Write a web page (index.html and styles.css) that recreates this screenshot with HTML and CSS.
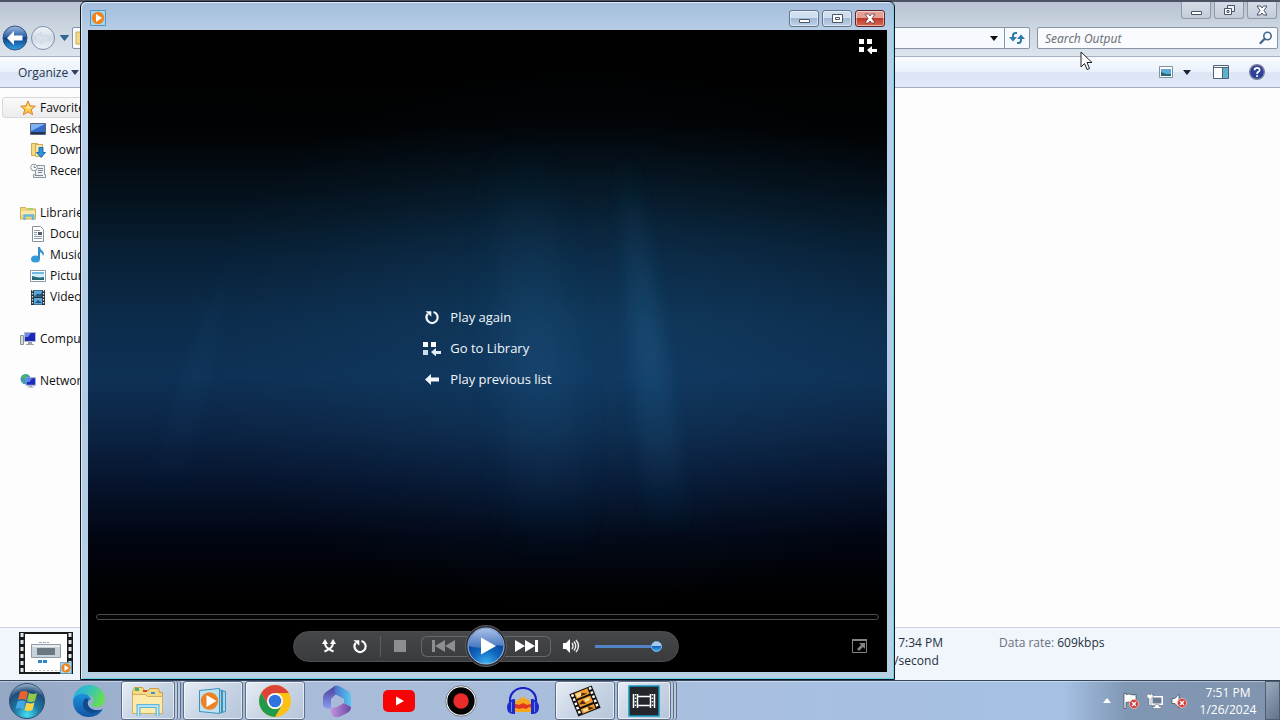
FILE: index.html
```
<!DOCTYPE html>
<html lang="en">
  <head>
    <meta charset="UTF-8" />
    <meta name="viewport" content="width=device-width, initial-scale=1.0" />
    <title>Windows Media Player</title>
    <link rel="stylesheet" href="styles.css">
  </head>
  <body>
    <!-- Shared icons -->
    <svg class="icon-defs" width="0" height="0" aria-hidden="true">
      <symbol id="icon-library" viewBox="0 0 20 16">
        <path fill="currentColor" d="M1 1h5v5h-5zM9 1h5v5h-5zM1 9h5v5h-5zM9 12l5-4v3h5v3h-5v3z" />
      </symbol>
      <symbol id="icon-repeat" viewBox="0 0 16 16">
        <path fill="none" stroke="currentColor" stroke-width="2.2" d="M9.500 3A5.600 5.600 0 1 1 3.800 4.800" />
        <path fill="currentColor" d="M1.500 2.200h5.800v5.600z" />
      </symbol>
      <symbol id="icon-picture" viewBox="0 0 16 14">
        <path fill="#fdfefe" stroke="#8b9aa6" d="M.5 1.500h15v11h-15z" />
        <path fill="#6fb9e4" d="M2 3h12v8h-12z" />
        <path fill="#d3eefa" d="M2 5h12v3h-12z" />
        <path fill="#256a72" d="M2 7l4 1 4 1 4-1v3h-12z" />
      </symbol>
      <symbol id="icon-wmp" viewBox="0 0 16 16">
        <path fill="#a9d5ee" stroke="#4b98c6" d="M.5 .5h15v15h-15z" />
        <circle cx="8" cy="8" r="6.2" fill="#ef8420" />
        <path fill="#fff" d="M6 4l6 4-6 4z" />
      </symbol>
      <symbol id="icon-error" viewBox="0 0 10 10">
        <circle cx="5" cy="5" r="4.5" fill="#d3342e" stroke="#f3b5b0" />
        <path stroke="#fff" stroke-width="1.500" d="M3 3l4 4M7 3l-4 4" />
      </symbol>
    </svg>

    <main class="desktop">
      <!-- Explorer window -->
      <section class="explorer">
        <div class="explorer-title">
          <button class="caption-btn" aria-label="Minimize"><svg width="30" height="17" viewBox="0 0 30 17"><path fill="#fff" stroke="#4a5466" d="M10.500 9.500h10v3h-10z" /></svg></button>
          <button class="caption-btn" aria-label="Restore"><svg width="30" height="17" viewBox="0 0 30 17"><path fill="#eef3f9" stroke="#4a5466" d="M13.500 3.500h7v6h-7z" /><path fill="#fff" stroke="#4a5466" d="M10.500 6.500h7v6h-7zM13 8.500h2v2h-2z" /></svg></button>
          <button class="caption-btn" aria-label="Close"><svg width="30" height="17" viewBox="0 0 30 17"><path fill="#fff" stroke="#4a5466" d="M10 4h3.500l1.500 2 1.500-2h3.500l-3 4.500 3 4.500h-3.500l-1.500-2-1.500 2h-3.500l3-4.500z" /></svg></button>
        </div>

        <div class="explorer-nav">
          <button class="plain-btn" aria-label="Back">
            <svg width="26" height="26" viewBox="0 0 26 26">
              <defs><linearGradient id="backFill" x2="0" y2="1"><stop offset="0" stop-color="#9fbce0" /><stop offset=".45" stop-color="#2a61a8" /><stop offset=".5" stop-color="#0c3f86" /><stop offset="1" stop-color="#2fa4e6" /></linearGradient></defs>
              <circle cx="13" cy="13" r="12" fill="url(#backFill)" stroke="#33527e" />
              <path fill="#fff" d="M5 13l7-7v4.500h8.500v5h-8.500v4.500z" />
            </svg>
          </button>
          <button class="plain-btn" aria-label="Forward">
            <svg width="26" height="26" viewBox="0 0 26 26">
              <defs><linearGradient id="fwdFill" x2="0" y2="1"><stop offset="0" stop-color="#f4f7fb" /><stop offset=".5" stop-color="#cfd9e6" /><stop offset="1" stop-color="#eef3f8" /></linearGradient></defs>
              <circle cx="13" cy="13" r="11.500" fill="url(#fwdFill)" stroke="#7e8fa8" />
              <path fill="#d9e2ec" stroke="#cdd7e2" d="M5 13l6-6v4h8v4h-8v4z" />
            </svg>
          </button>
          <button class="plain-btn" aria-label="Recent pages"><svg width="9" height="6" viewBox="0 0 9 6"><path fill="#2a6fa5" stroke="#24405f" stroke-width=".7" d="M.5 .5h8l-4 5z" /></svg></button>
          <div class="address">
            <span class="address-path"><svg width="16" height="16" viewBox="0 0 16 16"><path fill="#f3d987" stroke="#cfae4f" d="M1 2h6l1 2h7v10h-14z" /></svg></span>
            <button class="plain-btn address-drop" aria-label="Previous locations"><svg width="8" height="5" viewBox="0 0 8 5"><path fill="#111" d="M0 0h8l-4 5z" /></svg></button>
            <button class="plain-btn refresh" aria-label="Refresh">
              <svg width="16" height="14" viewBox="0 0 16 14"><path fill="none" stroke="#2f78a8" stroke-width="2" d="M8 2h-1.500q-2.500 0-2.500 3v2M8 12h1.500q2.500 0 2.500-3v-2" /><path fill="#2f78a8" d="M0 6h8l-4 4.500zM8 8h8l-4-4.500z" /></svg>
            </button>
          </div>
          <label class="search">
            <input type="text" placeholder="Search Output" aria-label="Search Output" />
            <svg width="14" height="14" viewBox="0 0 14 14"><circle cx="8.500" cy="5" r="3.700" fill="#f4faff" stroke="#47668c" stroke-width="1.600" /><path stroke="#47668c" stroke-width="2.400" stroke-linecap="round" d="M5.500 8l-4 4" /></svg>
          </label>
        </div>

        <div class="explorer-toolbar">
          <button class="plain-btn organize">Organize <svg width="8" height="5" viewBox="0 0 8 5"><path fill="#34405a" d="M0 0h8l-4 5z" /></svg></button>
          <div class="toolbar-right">
            <button class="plain-btn" aria-label="Change view"><svg width="14" height="13" viewBox="0 0 14 13"><path fill="#fff" stroke="#7f90a0" d="M.5 .5h13v11h-13z" /><path fill="#5aabd9" d="M2 3h10v7h-10z" /><path fill="#256a72" d="M2 6l5 2h5v2h-10z" /></svg></button>
            <button class="plain-btn view-drop" aria-label="More views"><svg width="8" height="5" viewBox="0 0 8 5"><path fill="#1c2433" d="M0 0h8l-4 5z" /></svg></button>
            <button class="plain-btn" aria-label="Preview pane"><svg width="16" height="14" viewBox="0 0 16 14"><path fill="#fff" stroke="#4c6379" d="M.5 .5h15v13h-15z" /><path fill="#5db2cd" d="M10 3h5v10h-5z" /><path stroke="#4c6379" d="M1 2.500h14M9.500 3v10" /></svg></button>
            <button class="plain-btn help" aria-label="Help"><svg width="16" height="16" viewBox="0 0 16 16"><circle cx="8" cy="8" r="7.300" fill="#2b3f9b" stroke="#78819a" stroke-width="1.400" /><path fill="none" stroke="#fff" stroke-width="1.800" d="M5.500 6.300q.2-2.500 2.600-2.500 2.500 0 2.500 2.100 0 1.200-1.400 2-1.100.6-1.100 2" /><circle cx="8.100" cy="12" r="1.100" fill="#fff" /></svg></button>
          </div>
        </div>

        <div class="explorer-body">
          <nav class="tree">
            <ul>
              <li class="tree-head selected"><svg width="16" height="16" viewBox="0 0 16 16"><path fill="#fbc94b" stroke="#d9822c" d="M8 1l2 4.800 5.300.4-4 3.400 1.300 5.100-4.600-2.800-4.600 2.800 1.300-5.100-4-3.400 5.300-.4z" /><path fill="#fff0a8" d="M8 4l1 3h3l-4 2-3-2h2z" /></svg>Favorites</li>
              <li><svg width="16" height="14" viewBox="0 0 16 14"><path fill="#346ccc" stroke="#5a6678" d="M.5 1.500h15v11h-15z" /><path fill="#7fb2f2" d="M1 2h14l-14 7z" /><path fill="#26334d" d="M1 10h14v2h-14z" /></svg>Desktop</li>
              <li><svg width="16" height="16" viewBox="0 0 16 16"><path fill="#f4d983" stroke="#cdaa55" d="M1.500 1.500h6v12h-6z" /><path fill="#f9e7ab" stroke="#cdaa55" d="M5.500 2.500h7v12h-7z" /><path fill="#2c95dc" stroke="#1b6ca9" d="M9 5.500h4v5h2.500l-4.500 5-4.500-5h2.500z" /></svg>Downloads</li>
              <li><svg width="16" height="16" viewBox="0 0 16 16"><path fill="#eef1f3" stroke="#8c969e" d="M6.500 2.500h8v9h1v3h-12v-3h2v-9z" /><circle cx="4" cy="4.500" r="3.300" fill="#fff" stroke="#8c969e" /><path fill="none" stroke="#7d868e" d="M4 2.500v2h2M8 5.500h5M8 7.500h5M8 9.500h4M5 12.500h8" /></svg>Recent Places</li>
            </ul>
            <ul>
              <li class="tree-head"><svg width="16" height="14" viewBox="0 0 16 14"><path fill="#f2d57c" stroke="#cfae58" d="M.5 1.500h5l1 1.500h9v10h-15z" /><path fill="#9ed26e" d="M8 2h5v2h-5z" /><path fill="#fae9ab" d="M1 5h14v4h-14z" /><path fill="none" stroke="#68b8d9" stroke-width="2.400" d="M4.500 14v-4.500h8.500v4.500" /></svg>Libraries</li>
              <li><svg width="16" height="16" viewBox="0 0 16 16"><path fill="#fff" stroke="#88919a" d="M2.500 .5h8l3 3v12h-11z" /><path stroke="#929ba3" d="M4 4.500h6M4 6.500h3M4 8.500h3M4 10.500h8M4 12.500h8" /><path fill="#53606b" d="M8 6h4v3h-4z" /></svg>Documents</li>
              <li><svg width="16" height="16" viewBox="0 0 16 16"><ellipse cx="5.500" cy="12" rx="4.500" ry="3.500" fill="#349bd8" /><path fill="#328fcb" d="M8 0h2q0 2 2.500 4 2.500 2 .5 5-.2-3-3-4v7h-2z" /></svg>Music</li>
              <li><svg width="16" height="14" viewBox="0 0 16 14"><use href="#icon-picture" /></svg>Pictures</li>
              <li><svg width="16" height="16" viewBox="0 0 16 16"><path fill="#26313b" d="M1 1h14v15h-14z" /><path fill="#5ba8df" d="M4 1.500h8v6h-8zM4 9h8v6.500h-8z" /><path fill="#235477" d="M4 7.500l4-3 2 1 2-2v4zM5 14l3-3 4 3z" /><path stroke="#dbe4e9" stroke-width="1.300" stroke-dasharray="1.500 1.500" d="M2.500 1v15M13.500 1v15" /></svg>Videos</li>
            </ul>
            <ul>
              <li class="tree-head"><svg width="16" height="14" viewBox="0 0 16 14"><path fill="#d5dad8" stroke="#8b9692" d="M.5 3.500h3v9h-3z" /><path fill="#1c27b8" stroke="#b4bccb" d="M4.500 .5h11v9h-11z" /><path fill="#6c86ee" d="M5 1h6l-3 4h-3z" /><path fill="#9ba3b3" d="M8 10h4v2h2v1h-8v-1h2z" /></svg>Computer</li>
            </ul>
            <ul>
              <li class="tree-head"><svg width="16" height="16" viewBox="0 0 17 16"><circle cx="6" cy="6" r="5.500" fill="#2e95cf" /><path fill="#55b35b" d="M2 3q3-3 6-2l-2 4-3 1zM1 7l3 1 1 3q-3-1-4-4z" /><path fill="#1c2bc0" stroke="#a9b5cb" d="M6.500 4.500h10v8h-10z" /><path fill="#6487ee" d="M7 5h6l-3 4h-3z" /><path fill="#97a3b5" d="M10 13h3v1h2v1h-7v-1h2z" /></svg>Network</li>
            </ul>
          </nav>
          <div class="file-area"></div>
        </div>

        <footer class="details">
          <svg class="thumb" width="54" height="42" viewBox="0 0 54 42">
            <path fill="#181a1c" d="M0 0h54v42h-54z" />
            <path fill="#fff" d="M6 2h42v38h-42z" />
            <path stroke="#dfe5e8" stroke-width="3" stroke-dasharray="4 3" d="M3 1v40M51 1v40" />
            <path fill="#c8d0d8" stroke="#8e9aa6" d="M12.500 12.500h29v13h-29z" />
            <path fill="#6c7881" d="M18 16h18v7h-18z" />
            <path fill="#e9edf0" d="M13 13h28v2h-28z" />
            <path stroke="#8ca6bc" stroke-dasharray="3 1" d="M20 10.500h10" />
            <path stroke="#2e86cb" stroke-width="3" stroke-dasharray="4 1" d="M19 29.500h10" />
            <path stroke="#b4b8bb" stroke-dasharray="2 2" d="M12 38.500h30" />
            <use href="#icon-wmp" x="41" y="30" width="12" height="12" />
          </svg>
          <dl class="details-main">
            <dt>Date created:</dt><dd>1/26/2024 7:34 PM</dd>
            <dt>Frame rate:</dt><dd>30 frames/second</dd>
          </dl>
          <dl class="details-rate">
            <dt>Data rate:</dt><dd>609kbps</dd>
          </dl>
        </footer>
      </section>

      <!-- Media player window -->
      <section class="player">
        <header class="player-title">
          <svg width="16" height="16" viewBox="0 0 16 16"><use href="#icon-wmp" /></svg>
          <div class="caption-group">
            <button class="caption-btn blue" aria-label="Minimize"><svg width="30" height="17" viewBox="0 0 30 17"><path fill="#fff" stroke="#4a5466" d="M10.500 9.500h10v3h-10z" /></svg></button>
            <button class="caption-btn blue" aria-label="Maximize"><svg width="30" height="17" viewBox="0 0 30 17"><path fill="#fff" stroke="#4a5466" d="M10.500 4.500h10v8h-10zM13.500 7.500h4v2h-4z" /></svg></button>
            <button class="caption-btn red" aria-label="Close"><svg width="30" height="17" viewBox="0 0 30 17"><path fill="#fff" stroke="#6c3a42" stroke-width=".8" d="M10 4h3.500l1.500 2 1.500-2h3.500l-3 4.500 3 4.500h-3.500l-1.500-2-1.500 2h-3.500l3-4.500z" /></svg></button>
          </div>
        </header>

        <div class="stage">
          <svg class="beams" viewBox="0 0 800 642" preserveAspectRatio="none" aria-hidden="true">
            <defs>
              <filter id="soft" x="-50%" y="-20%" width="200%" height="140%"><feGaussianBlur stdDeviation="8" /></filter>
              <filter id="wide" x="-80%" y="-20%" width="260%" height="140%"><feGaussianBlur stdDeviation="18" /></filter>
              <linearGradient id="beam" x2="0" y2="1"><stop offset="0" stop-color="#2a76aa" stop-opacity="0" /><stop offset=".5" stop-color="#2a76aa" stop-opacity=".3" /><stop offset="1" stop-color="#2a76aa" stop-opacity="0" /></linearGradient>
            </defs>
            <path fill="url(#beam)" filter="url(#soft)" opacity=".8" d="M528 120L548 120 605 510 560 510z" />
            <path fill="url(#beam)" filter="url(#wide)" opacity=".55" d="M405 110L460 110 500 530 425 530z" />
            <path fill="url(#beam)" filter="url(#soft)" opacity=".25" d="M150 190L95 480 50 480z" />
          </svg>

          <div class="stage-top">
            <button class="plain-btn" aria-label="Switch to Library"><svg width="20" height="17" viewBox="0 0 20 17"><use href="#icon-library" width="20" height="16" /></svg></button>
          </div>

          <div class="stage-menu">
            <div class="menu-list">
              <button class="menu-item"><svg width="18" height="16" viewBox="0 0 18 16"><use href="#icon-repeat" x="1" width="16" height="16" /></svg>Play again</button>
              <button class="menu-item"><svg width="18" height="16" viewBox="0 0 18 16"><path fill="#fff" d="M0 2h5v5h-5zM8 2h5v5h-5z" /><path fill="#cbdcea" d="M0 10h5v5h-5z" /><path fill="#e3edf5" d="M8 12l5-4v3h5v3h-5v2.500z" /></svg>Go to Library</button>
              <button class="menu-item"><svg width="18" height="16" viewBox="0 0 18 16"><path fill="currentColor" d="M2 8.500l6-5.500v3.500h8v4h-8v3.500z" /></svg>Play previous list</button>
            </div>
          </div>

          <input class="seek" type="range" min="0" max="100" value="0" aria-label="Seek" />

          <div class="controls">
            <div class="pill">
              <button class="ctl shuffle" aria-label="Shuffle"><svg width="16" height="16" viewBox="0 0 16 16"><path fill="none" stroke="#fff" stroke-width="2" d="M4 5q0 4 4 6 2 1.500 4.500 2.500M12 5q0 4-4 6-2 1.500-4.500 2.500" /><path fill="#fff" d="M1 6l3-5 3 5zM9 6l3-5 3 5z" /></svg></button>
              <button class="ctl" aria-label="Repeat"><svg width="16" height="16" viewBox="0 0 16 16"><use href="#icon-repeat" /></svg></button>
              <span class="divider"></span>
              <button class="ctl" aria-label="Stop"><svg width="12" height="12" viewBox="0 0 12 12"><path fill="#8d8e90" d="M0 0h12v12h-12z" /></svg></button>
              <button class="skip prev" aria-label="Previous"><svg width="24" height="12" viewBox="0 0 24 12"><path fill="#8d8e90" d="M0 0h3v12h-3zM13 0v12l-10-6zM23 0v12l-10-6z" /></svg></button>
              <button class="play" aria-label="Play">
                <svg width="42" height="42" viewBox="0 0 42 42">
                  <defs>
                    <linearGradient id="playTop" x2="0" y2="1"><stop offset="0" stop-color="#a9c0e8" /><stop offset="1" stop-color="#4577c0" /></linearGradient>
                    <radialGradient id="playBase" cx=".5" cy="1" r=".8"><stop offset="0" stop-color="#3bb6f5" /><stop offset=".5" stop-color="#1165bd" /><stop offset="1" stop-color="#0a3c91" /></radialGradient>
                  </defs>
                  <circle cx="21" cy="21" r="20.500" fill="#2c2f35" stroke="#5b5e62" />
                  <circle cx="21" cy="21" r="18" fill="url(#playBase)" stroke="#a6c0e6" />
                  <path fill="url(#playTop)" d="M3.500 21a17.500 17.500 0 0 1 35 0q-9-2-17.500 1-9 2-17.500-1z" />
                  <path fill="#fff" d="M16 12.500l15 8.500-15 8.500z" />
                </svg>
              </button>
              <button class="skip next" aria-label="Next"><svg width="24" height="12" viewBox="0 0 24 12"><path fill="#fff" d="M0 0v12l10-6zM10 0v12l10-6zM20 0h3v12h-3z" /></svg></button>
              <button class="ctl mute" aria-label="Mute"><svg width="18" height="16" viewBox="0 0 18 16"><path fill="#fff" d="M1 5h3l4-4v14l-4-4h-3z" /><path fill="none" stroke="#eee" stroke-width="1.400" d="M10 5q2 3 0 6M12 3.500q3.500 4.500 0 9M14 2q5 6 0 12" /></svg></button>
              <input class="volume" type="range" min="0" max="100" value="100" aria-label="Volume" />
            </div>
            <button class="plain-btn fullscreen" aria-label="View full screen"><svg width="16" height="14" viewBox="0 0 16 14"><path fill="none" stroke="#85827f" d="M.5 .5h14v13h-14z" /><path fill="#85827f" d="M0 0h15v2h-15zM7 4h6v6l-2-2-4 4-2-2 4-4z" /></svg></button>
          </div>
        </div>
      </section>

      <svg class="cursor" width="13" height="20" viewBox="0 0 13 20" aria-hidden="true"><path fill="#fff" stroke="#222" d="M1 1v15l3.500-3.500 2.500 6 2.500-1-2.500-6h5z" /></svg>
    </main>

    <!-- Taskbar -->
    <footer class="taskbar">
      <button class="start" aria-label="Start">
        <svg width="38" height="38" viewBox="0 0 38 38">
          <defs><radialGradient id="orb" cx=".5" cy=".9" r=".9"><stop offset="0" stop-color="#45e0f4" /><stop offset=".4" stop-color="#1c78a7" /><stop offset=".75" stop-color="#214d79" /><stop offset="1" stop-color="#a0b8d0" /></radialGradient></defs>
          <circle cx="19" cy="19" r="17.500" fill="url(#orb)" stroke="#2d4e70" />
          <path fill="#ec6130" d="M12 10q4-2 8 0l-2 8q-4-2-8 0z" />
          <path fill="#93c746" d="M21 11q4 2 8 0l-2 8q-4 2-8 0z" />
          <path fill="#47a7e5" d="M9.500 19.500q4-2 8 0l-2 7.500q-4-2-8 0z" />
          <path fill="#fbd34b" d="M18.500 20.500q4 2 8 0l-2 7.500q-4 2-8 0z" />
        </svg>
      </button>
      <div class="tasks">
        <button class="task" aria-label="Microsoft Edge">
          <svg width="34" height="34" viewBox="0 0 34 34">
            <defs>
              <linearGradient id="edgeTop" y2=".4"><stop offset="0" stop-color="#2aa6de" /><stop offset=".5" stop-color="#34c2c0" /><stop offset="1" stop-color="#66dc55" /></linearGradient>
              <linearGradient id="edgeLow" x2="0" y2="1"><stop offset="0" stop-color="#1b93dc" /><stop offset="1" stop-color="#1254a4" /></linearGradient>
            </defs>
            <path fill="url(#edgeTop)" d="M1 16C2 7 9 1 17 1c9 0 16 6 16 14 0 5-4 8-8 8-4 0-6-1-5-3 3-4 1-9-5-9-6 0-11 2-14 5z" />
            <path fill="url(#edgeLow)" d="M1 17c1-6 7-8 12-7 4 1 6 4 6 6-3-1-4 2-3 5 1 4 7 6 11 5 2 0 3-1 4-1-3 5-8 8-14 8C8 33 1 27 1 17z" />
            <path fill="#114a8b" d="M14 14c-6 5-3 14 6 15 4 0 8-2 10-3-5 1-12 0-14-5-1-3 0-4 1-5-1-1-2-2-3-2z" />
          </svg>
        </button>
        <button class="task open stacked" aria-label="Windows Explorer">
          <svg width="34" height="32" viewBox="0 0 34 32">
            <path fill="#f4d982" stroke="#c6a14a" d="M1.500 6.500l2-4h8l2 3h4l1-2h9l1 4h3v20h-30z" />
            <path fill="#46b26d" d="M4 3h4v3h-4z" /><path fill="#d04a31" d="M12 5h4v2h-4z" /><path fill="#3a94d0" d="M20 7h4v2h-4z" />
            <path fill="#fbeaac" stroke="#d2b05d" d="M1.500 9.500h13l2 2h15v17h-30z" />
            <path fill="none" stroke="#5fb6d9" stroke-width="4" d="M7.500 31v-10h19v10" />
            <path fill="none" stroke="#c8eefa" stroke-width="1.500" d="M7.500 31v-10h19v10" />
          </svg>
        </button>
        <button class="task open" aria-label="Windows Media Player">
          <svg width="28" height="28" viewBox="0 0 28 28">
            <path fill="#a6d5ec" stroke="#3c91bb" d="M22.500 3.500l4 1v20l-4 1zM18.500 2.500l5 1v22l-5 1z" />
            <path fill="#bde2f3" stroke="#3c91bb" d="M.5 3.500l20-2v25l-20-2z" />
            <circle cx="10.500" cy="14" r="8.700" fill="#ed8125" />
            <path fill="#fff" d="M7.500 8l10 6-10 6z" />
          </svg>
        </button>
        <button class="task open" aria-label="Google Chrome">
          <svg width="32" height="32" viewBox="0 0 32 32">
            <circle cx="16" cy="16" r="16" fill="#fbc116" />
            <path fill="#dc4437" d="M2.150 8A16 16 0 0 1 29.850 8H16L9.070 20z" />
            <path fill="#229a4d" d="M2.150 8A16 16 0 0 0 16 32L22.930 20A8 8 0 0 1 9.070 20z" />
            <circle cx="16" cy="16" r="8" fill="#fff" />
            <circle cx="16" cy="16" r="6.300" fill="#2f73e0" />
          </svg>
        </button>
        <button class="task" aria-label="Microsoft 365">
          <svg width="32" height="32" viewBox="0 0 32 32">
            <defs>
              <linearGradient id="mA" x2="0" y2="1"><stop offset="0" stop-color="#4a3c9c" /><stop offset="1" stop-color="#8a9df0" /></linearGradient>
              <linearGradient id="mB"><stop offset="0" stop-color="#4a6cc8" /><stop offset="1" stop-color="#57c8ef" /></linearGradient>
              <linearGradient id="mC"><stop offset="0" stop-color="#c394e0" /><stop offset="1" stop-color="#6848a0" /></linearGradient>
            </defs>
            <path fill="url(#mB)" d="M13 1q3-1 5 0l9 5q3 2 3 5v11l-7-4v-4l-9-5q-3-2-1-8z" />
            <path fill="url(#mA)" d="M14 1q-2 5 1 8l-5 5v9q-5 2-8-2v-9q0-3 3-5z" />
            <path fill="url(#mC)" d="M10 23l6-1 7-4 7 4q0 4-4 6l-8 4q-3 1-6-1-3-3-2-8z" />
            <circle cx="16" cy="16" r="5" fill="#a9b9da" />
          </svg>
        </button>
        <button class="task" aria-label="YouTube">
          <svg width="32" height="22" viewBox="0 0 32 22"><rect width="32" height="22" rx="5" fill="#f70505" /><path fill="#fff" d="M13 6.500l8 4.500-8 4.500z" /></svg>
        </button>
        <button class="task" aria-label="Screen recorder">
          <svg width="32" height="32" viewBox="0 0 32 32"><circle cx="16" cy="16" r="15.300" fill="#fff" stroke="#727d88" /><circle cx="16" cy="16" r="13.700" fill="#050505" /><circle cx="16" cy="16" r="7.700" fill="#ec2b2b" /></svg>
        </button>
        <button class="task" aria-label="Audacity">
          <svg width="32" height="28" viewBox="0 0 32 28">
            <path fill="#f6a51d" d="M7 17l2-4 2 1 2-4 2 2 2-3 2 4 2-2 2 4 2-1v11h-18z" />
            <path fill="#e53520" d="M6 18l3-1 3 1 4-2 4 2 3-1 3 1v3l-4-1-3 2-3-1-4 1-3-1-3 1z" />
            <path fill="none" stroke="#1723c6" stroke-width="2.200" d="M3 16V13A13 12 0 0 1 29 13V16" />
            <path fill="#1c2ccc" d="M6 12h2v15h-2q-6 0-6-7 0-5 6-8zM26 12h-2v15h2q6 0 6-7 0-5-6-8z" />
            <path stroke="#6c8cf0" d="M4.500 15v10M27.500 15v10" />
          </svg>
        </button>
        <button class="task open" aria-label="Video editor">
          <svg width="32" height="32" viewBox="0 0 32 32">
            <g transform="rotate(-22 16 16)">
              <path fill="#15110d" d="M4 4h24v24h-24z" />
              <path fill="#ef9b2f" d="M9 5h14v6h-14zM9 13h14v7h-14zM9 22h14v5h-14z" />
              <path fill="#fbd997" d="M10 6h5v4h-5zM16 14h5v3h-5zM11 23h5v3h-5z" />
              <path fill="#5a2a0c" d="M16 7l5 3h-7zM9 17l5-3 2 5zM17 22l5 4h-6z" />
              <path stroke="#fff" stroke-width="2.500" stroke-dasharray="2.500 2" d="M6.500 5v22M25.500 5v22" />
            </g>
          </svg>
        </button>
        <button class="task open stacked" aria-label="Movie maker">
          <svg width="32" height="32" viewBox="0 0 32 32">
            <path fill="#23272c" stroke="#1497bd" stroke-width="1.500" d="M1 1h30v30h-30z" />
            <path fill="none" stroke="#fff" stroke-width="1.500" d="M5.500 9v14M9.500 9v14M22.500 9v14M26.500 9v14M9.500 11.500h13M9.500 20.500h13" />
            <path stroke="#fff" stroke-width="1.500" stroke-dasharray="1.500 2" d="M7.500 9v14M24.500 9v14" />
          </svg>
        </button>
      </div>

      <div class="tray">
        <button class="plain-btn tray-btn" aria-label="Show hidden icons"><svg width="8" height="5" viewBox="0 0 8 5"><path fill="#fff" d="M0 5h8l-4-5z" /></svg></button>
        <button class="plain-btn tray-btn" aria-label="Action Center"><svg width="16" height="16" viewBox="0 0 16 16"><path fill="#fff" stroke="#38485c" stroke-width=".7" d="M1 .5h2v1q3-1 5 0t5 0v8q-3 1-5 0t-5 0v6h-2z" /><use href="#icon-error" x="6" y="6" width="10" height="10" /></svg></button>
        <button class="plain-btn tray-btn" aria-label="Network"><svg width="16" height="16" viewBox="0 0 16 16"><path fill="#6a7c93" stroke="#fff" stroke-width="1.500" d="M4.800 3.800h10.400v7.400h-10.400z" /><path fill="#fff" stroke="#34465b" stroke-width=".4" d="M8 11.500h4v2h2v2h-8v-2h2zM0 1.500h1v-1.500h1v1.500h2v-1.500h1v1.500h1v3l-2 1v7h-2v-7l-2-1z" /></svg></button>
        <button class="plain-btn tray-btn" aria-label="Volume"><svg width="16" height="16" viewBox="0 0 16 16"><path fill="#fff" stroke="#38485c" stroke-width=".7" d="M1 5.500h3l4-4.500v14l-4-4.500h-3z" /><use href="#icon-error" x="6" y="5" width="10" height="10" /></svg></button>
        <time class="clock" datetime="2024-01-26T19:51"><span>7:51 PM</span><span>1/26/2024</span></time>
        <button class="show-desktop" aria-label="Show desktop"></button>
      </div>
    </footer>
  </body>
</html>
```
FILE: styles.css
```
* {
  margin: 0;
  padding: 0;
  box-sizing: border-box;
}

body {
  height: 100vh;
  display: flex;
  flex-direction: column;
  overflow: hidden;
  font-family: "Open Sans", "Noto Sans", sans-serif;
  font-size: 12px;
  color: #111;
}

svg {
  display: block;
  flex-shrink: 0;
}

button {
  font: inherit;
  color: inherit;
}

.icon-defs {
  position: absolute;
}

.plain-btn {
  display: flex;
  align-items: center;
  justify-content: center;
  background: none;
  border: none;
}

.desktop {
  position: relative;
  flex: 1;
  min-height: 0;
  display: flex;
}

/* Explorer window */
.explorer {
  flex: 1;
  min-width: 0;
  display: flex;
  flex-direction: column;
  background: #fdfdfe;
  border-top: 2px solid #4b5364;
}

.explorer-title {
  height: 22px;
  display: flex;
  justify-content: flex-end;
  gap: 3px;
  padding-right: 3px;
  background: linear-gradient(#b9c3d1, #c9d4e0);
}

.caption-btn {
  width: 30px;
  height: 17px;
  display: flex;
  align-items: center;
  justify-content: center;
  border: 1px solid #8d98a9;
  border-top: none;
  border-radius: 0 0 3px 3px;
  background: linear-gradient(#d5dce6, #c3cddb);
}

.caption-btn.blue,
.caption-btn.red {
  border: 1px solid #64748d;
  border-radius: 3px;
  box-shadow: inset 0 0 0 1px rgba(255, 255, 255, 0.5);
}

.caption-btn.blue {
  background: linear-gradient(#cfdff0 45%, #a2b9d4 50%, #bfd2e8);
}

.caption-btn.red {
  border-color: #5b2430;
  background: linear-gradient(#e3a095 45%, #bf3a2b 50%, #d9694f);
}

.explorer-nav {
  height: 33px;
  display: flex;
  align-items: center;
  padding: 0 2px 4px;
  gap: 2px;
  background: linear-gradient(#c9d4e0, #dce4ed);
  border-bottom: 1px solid #a5b1c2;
}

.explorer-nav > .plain-btn:nth-child(3) {
  width: 12px;
}

.address {
  flex: 1;
  height: 22px;
  display: flex;
  align-items: stretch;
  border: 1px solid #8794a6;
  border-radius: 2px;
  background: #f6f9fd;
  margin-right: 5px;
}

.address-path {
  flex: 1;
  padding: 2px;
}

.address-drop {
  width: 20px;
}

.refresh {
  width: 25px;
  border-left: 1px solid #8794a6;
}

.search {
  width: 241px;
  height: 22px;
  display: flex;
  align-items: center;
  padding: 0 4px 0 7px;
  border: 1px solid #8794a6;
  border-radius: 2px;
  background: #f9fbfe;
}

.search input {
  flex: 1;
  min-width: 0;
  border: none;
  outline: none;
  background: none;
  font: italic 12px "Noto Sans", "Open Sans", sans-serif;
}

.search input::placeholder {
  color: #6d7278;
}

.explorer-toolbar {
  height: 31px;
  display: flex;
  align-items: center;
  justify-content: space-between;
  padding: 0 15px 0 18px;
  background: linear-gradient(#f8fbff, #eaf1fb 50%, #dbe5f4 52%, #e1e9f7);
  border-bottom: 1px solid #a3afc1;
}

.organize {
  gap: 3px;
  color: #26344f;
}

.toolbar-right {
  display: flex;
  align-items: center;
}

.view-drop {
  width: 28px;
  margin-right: 12px;
}

.help {
  margin-left: 20px;
}

.explorer-body {
  flex: 1;
  min-height: 0;
  display: flex;
}

.tree {
  width: 200px;
  padding: 9px 0 0 2px;
}

.tree ul {
  list-style: none;
  margin-bottom: 21px;
}

.tree li {
  height: 21px;
  display: flex;
  align-items: center;
  gap: 4px;
  padding-left: 27px;
  border: 1px solid transparent;
}

.tree .tree-head {
  padding-left: 17px;
}

.tree .selected {
  border-color: #d8d9db;
  border-radius: 3px;
  background: linear-gradient(#fafafb, #ececee);
}

.file-area {
  flex: 1;
}

.details {
  height: 53px;
  display: flex;
  padding: 4px 0 0 19px;
  background: #f1f5fc;
  border-top: 1px solid #cdd3dc;
  line-height: 18px;
}

.details dl {
  display: grid;
  grid-template-columns: max-content max-content;
  column-gap: 3px;
  align-content: start;
  padding-top: 2px;
}

.details dt {
  color: #69727e;
  text-align: right;
}

.details dd {
  color: #23313f;
}

.details-main {
  margin-left: auto;
}

.details-rate {
  width: 337px;
  padding-left: 56px;
}

/* Media player window */
.player {
  position: absolute;
  top: 1px;
  bottom: 0;
  left: 80px;
  width: 815px;
  display: flex;
  flex-direction: column;
  padding: 0 7px 7px;
  border: 1px solid #10161e;
  border-radius: 6px 6px 0 0;
  background: linear-gradient(#a3bddb, #b7cde6 28px, #b9cfe9 120px, #b3cbe4 60%, #b8d1e3);
  box-shadow: inset 1px 1px 0 #dcebf8, inset -1px -1px 0 #69d2ee;
}

.player-title {
  height: 28px;
  display: flex;
  align-items: center;
  justify-content: space-between;
  padding: 4px 2px 0;
}

.caption-group {
  display: flex;
  gap: 3px;
}

.stage {
  position: relative;
  flex: 1;
  min-height: 0;
  display: flex;
  flex-direction: column;
  color: #fff;
  background:
    radial-gradient(ellipse 50% 42% at 62% 48%, rgba(26, 82, 128, 0.32), rgba(26, 82, 128, 0.2) 40%, rgba(26, 82, 128, 0.06) 75%, transparent),
    linear-gradient(#000 0%, #010203 15%, #04101a 25%, #082036 35%, #0c2c4b 45%, #0e3055 54%, #0b2342 63%, #06132c 71%, #020613 79%, #000 88%);
}

/* Soft light rays lying behind the menu */
.beams {
  position: absolute;
  inset: 0;
  width: 100%;
  height: 100%;
}

.stage-top,
.stage-menu,
.seek,
.controls {
  position: relative;
}

.stage-top {
  height: 32px;
  display: flex;
  justify-content: flex-end;
  padding-right: 9px;
}

.stage-menu {
  flex: 1;
  display: flex;
  align-items: center;
  justify-content: center;
  padding-top: 20px;
}

.menu-item {
  height: 31px;
  display: flex;
  align-items: center;
  gap: 9px;
  background: none;
  border: none;
  font-size: 13px;
  color: #f2f7fb;
}

.seek {
  appearance: none;
  height: 6px;
  margin: 0 8px;
  border: 1px solid #4a4b4d;
  border-radius: 3px;
  background: #050505;
}

.seek::-webkit-slider-thumb {
  appearance: none;
  width: 1px;
  height: 1px;
}

.controls {
  height: 52px;
  display: grid;
  grid-template-columns: 1fr auto 1fr;
  align-items: center;
  padding-right: 4px;
}

.pill {
  grid-column: 2;
  height: 31px;
  display: flex;
  align-items: center;
  padding: 0 16px 0 19px;
  border: 1px solid #4e4f51;
  border-radius: 16px;
  background: linear-gradient(#46474a, #3a3b3d);
}

.ctl {
  width: 30px;
  height: 29px;
  display: flex;
  align-items: center;
  justify-content: center;
  background: none;
  border: none;
}

.shuffle,
.mute {
  width: 32px;
}

.divider {
  width: 1px;
  height: 21px;
  margin: 0 4px 0 5px;
  background: #5c5d5f;
}

.skip {
  width: 46px;
  height: 21px;
  display: flex;
  align-items: center;
  justify-content: center;
  background: none;
  border: 1px solid #67686a;
}

.prev {
  margin-left: 6px;
  border-right: none;
  border-radius: 6px 0 0 6px;
}

.next {
  margin-right: 4px;
  border-left: none;
  border-radius: 0 6px 6px 0;
}

.play {
  position: relative;
  width: 42px;
  height: 42px;
  margin: 0 -2px;
  border: none;
  border-radius: 50%;
  background: none;
}

.volume {
  appearance: none;
  width: 67px;
  height: 12px;
  margin-left: 8px;
  background: linear-gradient(#5283c4, #5283c4) center / 100% 3px no-repeat;
}

.volume::-webkit-slider-thumb {
  appearance: none;
  width: 11px;
  height: 11px;
  border: 1px solid #83b6e8;
  border-radius: 50%;
  background: linear-gradient(#a9c9ee 40%, #1263bb 50%, #35b2f2);
}

.fullscreen {
  justify-self: end;
  margin-right: 15px;
}

.cursor {
  position: absolute;
  top: 51px;
  left: 1080px;
}

/* Taskbar */
.taskbar {
  height: 40px;
  display: flex;
  align-items: center;
  border-top: 1px solid #34455c;
  background: linear-gradient(90deg, #94a8c6, #a8bbd7 20%, #a9bfdf 55%, #a5c1e4 83%, #8097b4 88%, #8194ae);
  box-shadow: inset 0 1px 0 rgba(255, 255, 255, 0.4);
}

.start {
  width: 54px;
  height: 39px;
  display: flex;
  align-items: center;
  justify-content: center;
  background: none;
  border: none;
}

.tasks {
  flex: 1;
  display: flex;
  gap: 2px;
  padding-left: 5px;
}

.task {
  width: 60px;
  height: 39px;
  display: flex;
  align-items: center;
  justify-content: center;
  border: 1px solid transparent;
  border-radius: 3px;
  background: none;
}

.task.open {
  border-color: #5d6e88;
  background: linear-gradient(135deg, #e6edf5, #c9d5e5 50%, #b5c5da);
  box-shadow: inset 0 0 0 1px rgba(255, 255, 255, 0.6);
}

/* A second edge on the right for grouped windows */
.task.stacked {
  width: 54px;
  margin-right: 6px;
  box-shadow: inset 0 0 0 1px rgba(255, 255, 255, 0.6), 2px 0 0 #b9c8dc, 3px 0 0 #5d6e88, 5px 0 0 #b9c8dc, 6px 0 0 #5d6e88;
}

.tray {
  display: flex;
  align-items: center;
  height: 100%;
}

.tray-btn {
  width: 24px;
  height: 38px;
}

.clock {
  width: 74px;
  display: flex;
  flex-direction: column;
  text-align: center;
  line-height: 17px;
  color: #fff;
}

.show-desktop {
  width: 15px;
  height: 100%;
  border: 1px solid #4e5d72;
  background: linear-gradient(135deg, #9caabd, #64748c);
}
```
